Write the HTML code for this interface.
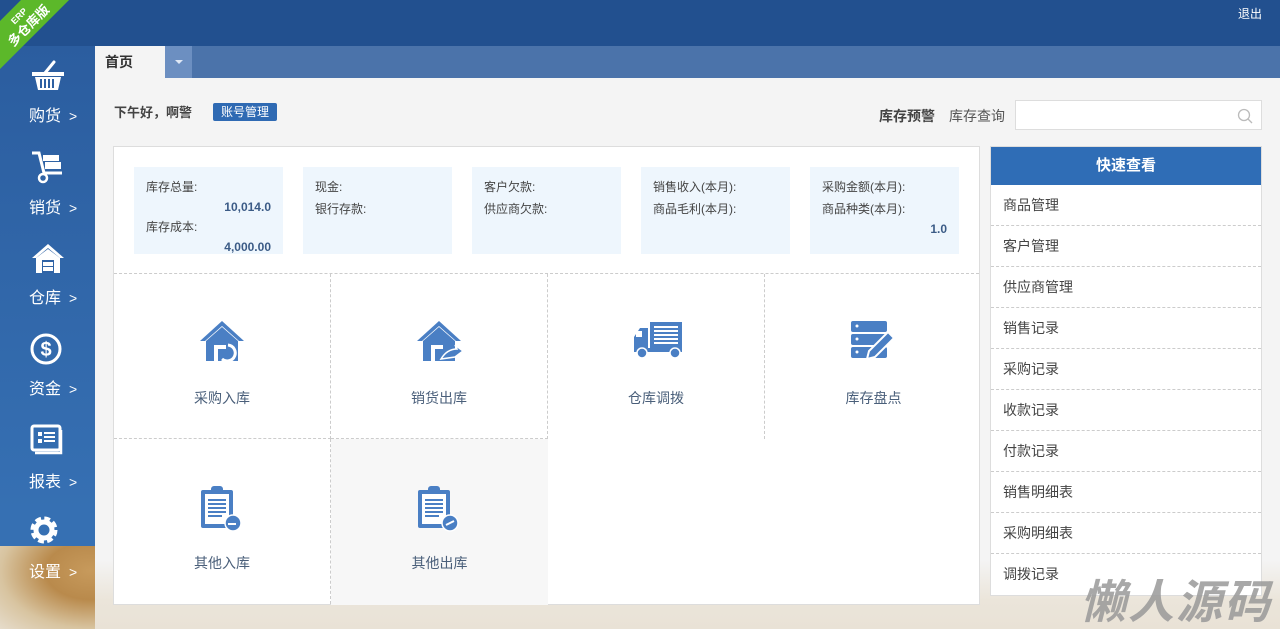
<!DOCTYPE html>
<html style="width:1280px;height:629px;overflow:hidden"><head><meta charset="utf-8">
<style>
*{margin:0;padding:0;box-sizing:border-box}
body{width:1280px;height:629px;overflow:hidden;position:relative;background:linear-gradient(#f4f4f4 0,#f4f4f4 560px,#ebe5da 600px,#e9e2d6 629px);font-family:"Liberation Sans","Noto Sans CJK SC",sans-serif;font-size:14px;color:#333}
.top{position:absolute;left:0;top:0;width:1280px;height:46px;background:#22508f}
.logout{position:absolute;right:18px;top:5px;color:#fff;font-size:12px}
.ribbon{position:absolute;left:-36px;top:4px;width:120px;height:34px;background:#5cb82a;transform:rotate(-45deg);color:#fff;text-align:center;font-size:13px;line-height:14px;font-weight:bold;padding-top:3px}
.ribbon small{display:block;font-size:9px}
.side{position:absolute;left:0;top:46px;width:95px;height:583px;background:linear-gradient(#2b5d9f,#3670b3 80%)}
.bread{position:absolute;left:0;top:500px;width:95px;height:83px;background:radial-gradient(ellipse at 95% 30%,#c79a5c 0,#b98a4c 35%,#d8c4a0 70%,#e6dccb 100%);}
.item{position:absolute;left:0;width:95px;text-align:center;color:#fff}
.item svg{display:block;margin:0 auto 0 30px}
.item .lb{position:absolute;left:29px;font-size:16px;white-space:nowrap}
.item .lb span{font-size:14px;margin-left:8px}
.tabbar{position:absolute;left:95px;top:46px;width:1185px;height:32px;background:#4b73aa}
.tab{position:absolute;left:0;top:0;width:70px;height:32px;background:#f4f4f4;font-weight:bold;font-size:14px;line-height:32px;padding-left:10px;color:#333}
.dd{position:absolute;left:70px;top:0;width:27px;height:32px;background:#6c8fc1}
.dd:after{content:"";position:absolute;left:10px;top:14px;border:4px solid transparent;border-top:4px solid #dfe8f5}
.greet{position:absolute;left:114px;top:102px;font-size:13px;font-weight:bold;color:#444}
.acct{position:absolute;left:213px;top:103px;background:#2f6ab3;color:#fff;font-size:12px;padding:1px 8px;border-radius:2px;line-height:16px}
.warn{position:absolute;left:879px;top:106px;font-size:14px;font-weight:bold;color:#444}
.query{position:absolute;left:949px;top:106px;font-size:14px;color:#555}
.search{position:absolute;left:1015px;top:100px;width:247px;height:30px;background:#fff;border:1px solid #ddd}
.main{position:absolute;left:113px;top:146px;width:867px;height:459px;background:#fff;border:1px solid #ddd}
.stat{position:absolute;top:20px;width:149px;height:87px;background:#eef6fd;font-size:12px;color:#444;padding:9px 12px;line-height:22px}
.stat .v{text-align:right;font-weight:bold;color:#3b5b86;line-height:18px}
.cell{position:absolute;width:217px;height:165px;text-align:center;color:#4a5f7a;font-size:14px}
.cell svg{position:absolute;left:84px;top:45px}
.cell .t{position:absolute;top:114px;width:100%}
.quick{position:absolute;left:990px;top:146px;width:272px;background:#fff;border:1px solid #ddd}
.qh{height:38px;background:#2f6db6;color:#fff;font-weight:bold;font-size:15px;text-align:center;line-height:38px}
.qi{height:41px;line-height:40px;padding-left:12px;font-size:14px;color:#444;border-bottom:1px dashed #ccc}
.qi:last-child{border-bottom:none}
.wm{position:absolute;left:1080px;top:566px;font-size:46px;font-weight:bold;font-style:italic;color:#999;opacity:.85;letter-spacing:2px}
</style></head><body>
<div class="top"><div class="logout">退出</div></div>
<div class="side">
 <div class="bread"></div>
 <div class="item" style="top:14px"><svg width="36" height="32" viewBox="0 0 36 32"><path d="M24 2 L15 13" stroke="#fff" stroke-width="3" stroke-linecap="round"/><path d="M2 12h32v4H2z M5 17h26l-3 13H8z" fill="#fff"/><path d="M11 19v9M15 19v9M19 19v9M23 19v9" stroke="#2d60a2" stroke-width="2"/></svg><div class="lb" style="top:42px">购货<span>&gt;</span></div></div>
 <div class="item" style="top:104px"><svg width="36" height="34" viewBox="0 0 36 34"><path d="M2 3h7l5 20h18" stroke="#fff" stroke-width="3" fill="none"/><rect x="13" y="5" width="16" height="6" fill="#fff"/><rect x="15" y="12" width="16" height="7" fill="#fff"/><circle cx="13" cy="28" r="4" fill="none" stroke="#fff" stroke-width="2.5"/></svg><div class="lb" style="top:44px">销货<span>&gt;</span></div></div>
 <div class="item" style="top:196px"><svg width="36" height="32" viewBox="0 0 36 32"><path d="M18 2 L2 16 L6 16 L18 6 L30 16 L34 16Z" fill="#fff"/><path d="M6 16 L18 7 L30 16 V31 H6Z" fill="#fff"/><rect x="12" y="18" width="12" height="13" fill="#2f63a6"/><rect x="13" y="20" width="10" height="4" fill="#fff"/><rect x="13" y="25" width="10" height="4" fill="#fff"/></svg><div class="lb" style="top:42px">仓库<span>&gt;</span></div></div>
 <div class="item" style="top:287px"><svg width="36" height="34" viewBox="0 0 36 34"><circle cx="16" cy="16" r="14" fill="none" stroke="#fff" stroke-width="3"/><text x="16" y="23" fill="#fff" font-size="20" font-weight="bold" text-anchor="middle" font-family="Liberation Sans">$</text></svg><div class="lb" style="top:42px">资金<span>&gt;</span></div></div>
 <div class="item" style="top:378px"><svg width="36" height="34" viewBox="0 0 36 34"><rect x="2" y="2" width="28" height="24" rx="2" fill="none" stroke="#fff" stroke-width="3"/><path d="M5 29h26V6" stroke="#fff" stroke-width="2.5" fill="none"/><rect x="8" y="8" width="4" height="4" fill="#fff"/><rect x="8" y="15" width="4" height="4" fill="#fff"/><path d="M14 9h11M14 13h11M14 17h11" stroke="#fff" stroke-width="2"/></svg><div class="lb" style="top:44px">报表<span>&gt;</span></div></div>
 <div class="item" style="top:468px"><svg width="36" height="34" viewBox="0 0 36 34"><circle cx="14" cy="16" r="10" fill="none" stroke="#fff" stroke-width="7" stroke-dasharray="5 2.85"/><circle cx="14" cy="16" r="8" fill="none" stroke="#fff" stroke-width="5"/></svg><div class="lb" style="top:44px">设置<span>&gt;</span></div></div>
</div>
<div class="ribbon"><small>ERP</small>多仓库版</div>
<div class="tabbar"><div class="tab">首页</div><div class="dd"></div></div>
<div class="greet">下午好，啊警</div><div class="acct">账号管理</div>
<div class="warn">库存预警</div><div class="query">库存查询</div>
<div class="search"><svg style="position:absolute;right:8px;top:7px" width="16" height="16" viewBox="0 0 16 16"><circle cx="7" cy="7" r="5.5" fill="none" stroke="#bbb" stroke-width="1.3"/><path d="M11 11l4 4" stroke="#bbb" stroke-width="1.3"/></svg></div>
<div class="main">
 <div class="stat" style="left:20px">库存总量:<div class="v">10,014.0</div>库存成本:<div class="v">4,000.00</div></div>
 <div class="stat" style="left:189px">现金:<br>银行存款:</div>
 <div class="stat" style="left:358px">客户欠款:<br>供应商欠款:</div>
 <div class="stat" style="left:527px">销售收入(本月):<br>商品毛利(本月):</div>
 <div class="stat" style="left:696px">采购金额(本月):<br>商品种类(本月):<div class="v">1.0</div></div>
 <div style="position:absolute;left:0;top:126px;width:865px;border-top:1px dashed #ccc"></div>
 <div class="cell" style="left:0;top:127px;border-right:1px dashed #ccc;border-bottom:1px dashed #ccc"><svg width="48" height="44" viewBox="0 0 48 44"><path d="M24 2 L2 22 L7 22 L24 7 L41 22 L46 22Z" fill="#4a7fc4"/><path d="M8 22 L24 8 L40 22 V42 H8Z" fill="#4a7fc4"/><path d="M18 42V28h10" stroke="#fff" stroke-width="4" fill="none"/><path d="M30 26a8 8 0 1 1-6 14" stroke="#fff" stroke-width="3" fill="none"/></svg><div class="t">采购入库</div></div>
 <div class="cell" style="left:217px;top:127px;border-right:1px dashed #ccc;border-bottom:1px dashed #ccc"><svg width="50" height="44" viewBox="0 0 50 44"><path d="M24 2 L2 22 L7 22 L24 7 L41 22 L46 22Z" fill="#4a7fc4"/><path d="M8 22 L24 8 L40 22 V42 H8Z" fill="#4a7fc4"/><path d="M18 42V28h10" stroke="#fff" stroke-width="4" fill="none"/><path d="M26 40 Q32 30 42 30 L40 26 L48 32 L40 38Z" fill="#4a7fc4" stroke="#fff" stroke-width="1.5"/></svg><div class="t">销货出库</div></div>
 <div class="cell" style="left:434px;top:127px;border-right:1px dashed #ccc"><svg width="52" height="40" viewBox="0 0 52 40"><rect x="18" y="3" width="32" height="26" fill="#4a7fc4"/><path d="M22 8h24M22 12h24M22 16h24M22 20h24M22 24h24" stroke="#fff" stroke-width="2"/><path d="M2 18 L8 9 H16 V33 H2Z" fill="#4a7fc4"/><rect x="4" y="12" width="6" height="6" fill="#fff"/><rect x="2" y="29" width="48" height="4" fill="#4a7fc4"/><circle cx="10" cy="34" r="5" fill="#4a7fc4" stroke="#fff" stroke-width="1.5"/><circle cx="43" cy="34" r="5" fill="#4a7fc4" stroke="#fff" stroke-width="1.5"/></svg><div class="t">仓库调拨</div></div>
 <div class="cell" style="left:651px;top:127px"><svg width="48" height="42" viewBox="0 0 48 42"><rect x="2" y="2" width="36" height="11" rx="2" fill="#4a7fc4"/><rect x="2" y="15" width="36" height="11" rx="2" fill="#4a7fc4"/><rect x="2" y="28" width="36" height="11" rx="2" fill="#4a7fc4"/><circle cx="8" cy="7" r="1.5" fill="#fff"/><circle cx="8" cy="20" r="1.5" fill="#fff"/><circle cx="8" cy="33" r="1.5" fill="#fff"/><path d="M18 40 L20 32 L39 13 L45 19 L26 38Z" fill="#4a7fc4" stroke="#fff" stroke-width="2"/></svg><div class="t">库存盘点</div></div>
 <div class="cell" style="left:0;top:292px;border-right:1px dashed #ccc"><svg width="46" height="48" viewBox="0 0 46 48"><rect x="3" y="6" width="32" height="38" rx="2" fill="#4a7fc4"/><rect x="7" y="10" width="24" height="30" fill="#fff"/><rect x="13" y="2" width="12" height="8" rx="3" fill="#4a7fc4"/><path d="M10 16h18M10 20h18M10 24h18M10 28h18M10 32h14" stroke="#4a7fc4" stroke-width="2"/><circle cx="35" cy="39" r="8" fill="#4a7fc4" stroke="#fff" stroke-width="1.5"/><path d="M30 40h8" stroke="#fff" stroke-width="2"/></svg><div class="t">其他入库</div></div>
 <div class="cell" style="left:217px;top:292px;background:#f7f7f7;height:166px"><svg width="46" height="48" viewBox="0 0 46 48"><rect x="3" y="6" width="32" height="38" rx="2" fill="#4a7fc4"/><rect x="7" y="10" width="24" height="30" fill="#fff"/><rect x="13" y="2" width="12" height="8" rx="3" fill="#4a7fc4"/><path d="M10 16h18M10 20h18M10 24h18M10 28h18M10 32h14" stroke="#4a7fc4" stroke-width="2"/><circle cx="35" cy="39" r="8" fill="#4a7fc4" stroke="#fff" stroke-width="1.5"/><path d="M31 41 L39 37" stroke="#fff" stroke-width="2"/></svg><div class="t">其他出库</div></div>
</div>
<div class="quick"><div class="qh">快速查看</div>
 <div class="qi">商品管理</div><div class="qi">客户管理</div><div class="qi">供应商管理</div><div class="qi">销售记录</div><div class="qi">采购记录</div><div class="qi">收款记录</div><div class="qi">付款记录</div><div class="qi">销售明细表</div><div class="qi">采购明细表</div><div class="qi">调拨记录</div>
</div>
<div class="wm">懒人源码</div>
</body></html>
